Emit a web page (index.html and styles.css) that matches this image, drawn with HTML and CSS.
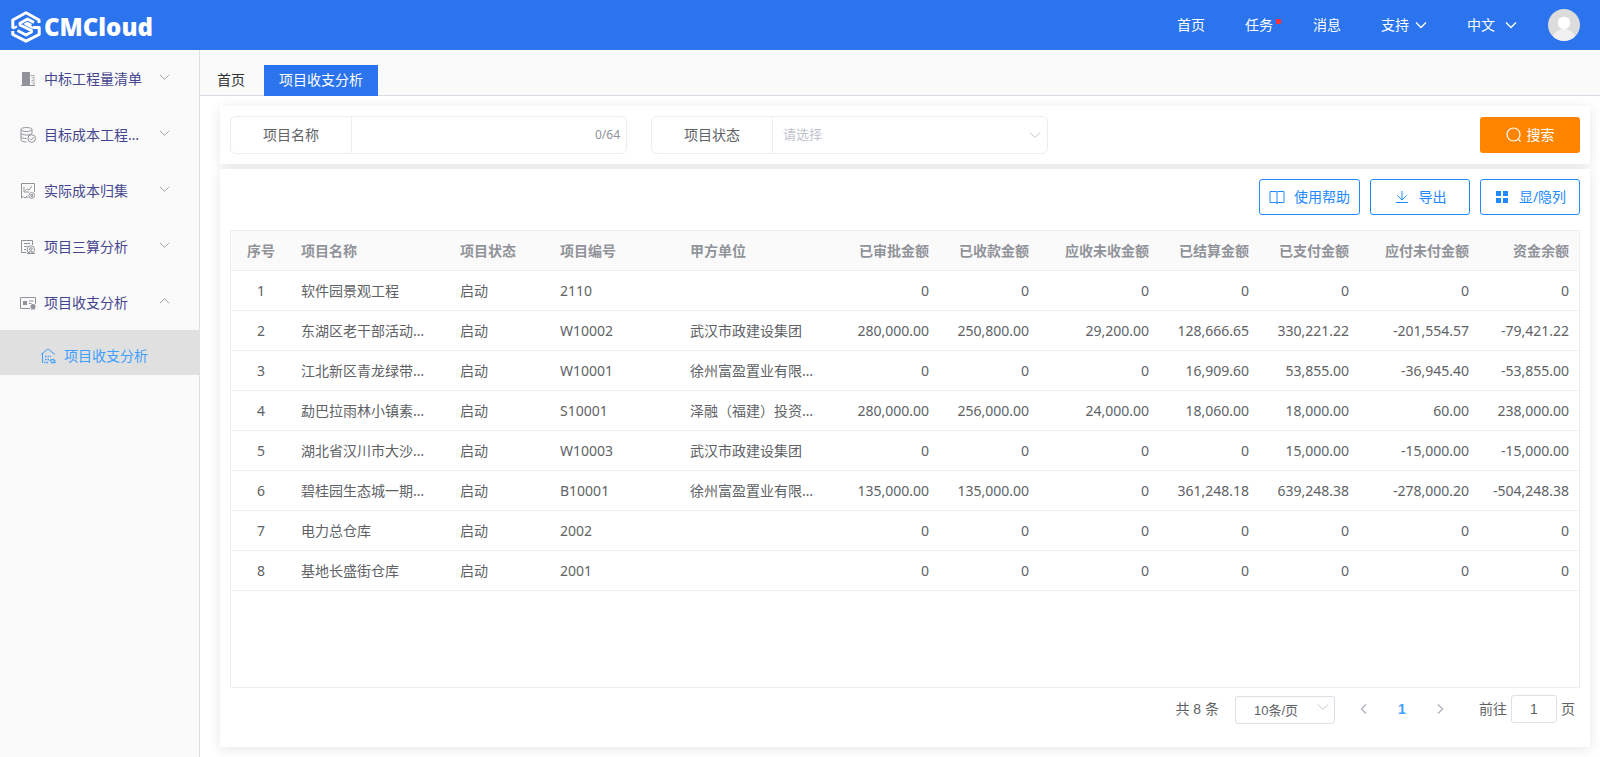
FILE: index.html
```html
<!DOCTYPE html>
<html lang="zh-CN">
<head>
<meta charset="utf-8">
<meta name="viewport" content="width=device-width, initial-scale=1">
<title>项目收支分析 - CMCloud</title>
<link rel="stylesheet" href="styles.css">
</head>
<body>
<svg class="defs" aria-hidden="true">
  <symbol id="down" viewBox="0 0 12 12"><path d="M1 3.5 6 8.5 11 3.5" fill="none" stroke="currentColor"/></symbol>
  <symbol id="up" viewBox="0 0 12 12"><path d="M1 8.500 6 3.500 11 8.500" fill="none" stroke="currentColor"/></symbol>
</svg>
<header class="topbar">
  <a class="logo" href="#" aria-label="CMCloud">
    <svg class="logo-mark" viewBox="0 0 30 32" fill="none" stroke="#fff" stroke-width="3" stroke-linejoin="round">
      <path d="M1.800 17.500V9L15 1.800 28 9V12"/>
      <path d="M1.800 20V23.500L15 30.200 28.200 23.500V16.500H22"/>
      <path d="M23 11.500 16.500 8 9 12.200V14L20.500 19.500V21L15 24 6.500 19.500" stroke-width="2.800"/>
      <path d="M20.500 13.800 16.500 11.800 14.200 13 22 17" stroke-width="2"/>
      <path d="M1.800 17.500 6 15.500" stroke-width="2"/>
    </svg>
    <span class="logo-text">CMCloud</span>
  </a>
  <nav class="topnav">
    <a href="#">首页</a>
    <a href="#" class="has-dot">任务</a>
    <a href="#">消息</a>
    <button type="button" class="nav-menu">支持<svg class="chev"><use href="#down"/></svg></button>
    <button type="button" class="nav-menu nav-lang">中文<svg class="chev"><use href="#down"/></svg></button>
    <button type="button" class="avatar" aria-label="用户">
      <svg viewBox="0 0 32 32"><circle cx="16" cy="16" r="16" fill="#dcdcdc"/><path d="M5 27.600C7 22.500 11 20 16 20s9 2.500 11 7.600A16 16 0 0 1 5 27.600Z" fill="#f0f0f0"/><circle cx="16" cy="14" r="6.200" fill="#fff"/></svg>
    </button>
  </nav>
</header>
<div class="shell">
  <aside class="sidebar">
    <button type="button" class="menu-item">
      <svg class="menu-icon" viewBox="0 0 16 16"><path d="M2 1h8v13H2zM1 14h14v1H1z" fill="#909399"/><path d="M10.500 4.500h3.500V14.500M11.500 7h1.500M11.500 9.500h1.500M11.500 12h1.500" fill="none" stroke="#a8abb2"/></svg>
      <span>中标工程量清单</span><svg class="chev"><use href="#down"/></svg>
    </button>
    <button type="button" class="menu-item">
      <svg class="menu-icon" viewBox="0 0 16 16" fill="none" stroke="#909399"><ellipse cx="6.500" cy="2.500" rx="5.500" ry="2"/><path d="M1 2.500v3.500c0 1.200 2.500 2 5.500 2s5.500-.8 5.500-2V2.500M1 6v3.500c0 1.200 2.500 2 5.500 2M1 9.500V13c0 1.200 2.500 2 5.500 2"/><circle cx="11.700" cy="11.500" r="3.800"/><path d="m9.800 11.500 1.500 1.500 2.500-2.700"/></svg>
      <span>目标成本工程量清单</span><svg class="chev"><use href="#down"/></svg>
    </button>
    <button type="button" class="menu-item">
      <svg class="menu-icon" viewBox="0 0 16 16" fill="none" stroke="#909399"><path d="M1.500 15V.5h13V9M1.500 15l2-1.500L5 15l2-1.500L8 15M4 4v5h5M5.500 7.500l2-1.500 1.500 1 3-4"/><circle cx="11.700" cy="12.500" r="2.900"/><path d="M11 11.500h1.500v2H11z"/></svg>
      <span>实际成本归集</span><svg class="chev"><use href="#down"/></svg>
    </button>
    <button type="button" class="menu-item">
      <svg class="menu-icon" viewBox="0 0 16 16" fill="none" stroke="#909399"><path d="M12.500 6V1.500h-11v12h5M4 4.500h6M4 7.500h3.500M4 10.500h2"/><circle cx="10.800" cy="10.500" r="3.700"/><circle cx="10.800" cy="10" r="1.300"/><path d="M7 14.500h8M9 13l1.800-1.200 1.800 1.200"/></svg>
      <span>项目三算分析</span><svg class="chev"><use href="#down"/></svg>
    </button>
    <button type="button" class="menu-item" aria-expanded="true">
      <svg class="menu-icon" viewBox="0 0 16 16" fill="none" stroke="#909399"><path d="M10 13.500H.5v-11h15V9M9 6h4.500M9 8.500h2.500"/><path d="M3 6h4v4H3z" fill="#909399" stroke="none"/><circle cx="13" cy="11.500" r="2.500" fill="#909399" stroke="none"/><path d="m12 13-.5 1.500 1.500-.7 1.500.7-.5-1.500" stroke-width=".8"/></svg>
      <span>项目收支分析</span><svg class="chev"><use href="#up"/></svg>
    </button>
    <a class="submenu-item" href="#" aria-current="page">
      <svg class="menu-icon" viewBox="0 0 16 16" fill="none" stroke="currentColor"><path d="M1 6.500 8 1l7 5.500M2.500 5.500V15"/><path d="M5 8.500h6M5 11.500h4M4 14.500h5" stroke-width="1.500" stroke-dasharray="1.500 1"/><path d="M10 13.500c0-2.500 5-2.500 5 0M11 14.500h4.500" stroke-width="1.300"/></svg>
      <span>项目收支分析</span>
    </a>
  </aside>
  <main class="main">
    <nav class="tabs">
      <a class="tab" href="#">首页</a>
      <a class="tab tab-active" href="#" aria-current="page">项目收支分析</a>
    </nav>
    <div class="content">
      <form class="card search">
        <div class="field">
          <label for="name">项目名称</label>
          <input id="name" type="text" maxlength="64">
          <span class="counter">0/64</span>
        </div>
        <div class="field">
          <label for="status">项目状态</label>
          <select id="status"><option>请选择</option><option>启动</option></select>
          <svg class="chev"><use href="#down"/></svg>
        </div>
        <button type="button" class="btn btn-search">
          <svg viewBox="0 0 16 16" fill="none" stroke="currentColor" stroke-width="1.200"><circle cx="7.500" cy="7.500" r="6.500"/><path d="m12.500 12.500 2 2"/></svg>搜索
        </button>
      </form>
      <section class="card report">
        <div class="toolbar">
          <button type="button" class="btn btn-line">
            <svg viewBox="0 0 16 16" fill="none" stroke="currentColor"><path d="M1 2.500h6q1 0 1 1 0-1 1-1h6v11H9q-1 0-1 1 0-1-1-1H1zM8 3.500v11"/></svg>使用帮助
          </button>
          <button type="button" class="btn btn-line">
            <svg viewBox="0 0 16 16" fill="none" stroke="currentColor"><path d="M8 2v9M3.500 6.500 8 11l4.500-4.500M2 13.500h12"/></svg>导出
          </button>
          <button type="button" class="btn btn-line">
            <svg viewBox="0 0 16 16" fill="currentColor"><path d="M2 2h5v5H2zM9 2h5v5H9zM2 9h5v5H2zM9 9h5v5H9z"/></svg>显/隐列
          </button>
        </div>
        <div class="table-box">
          <table class="grid">
            <colgroup><col class="c60"><col><col class="c100"><col class="c130"><col><col class="c100"><col class="c100"><col class="c120"><col class="c100"><col class="c100"><col class="c120"><col class="c100"></colgroup>
            <thead><tr><th>序号</th><th>项目名称</th><th>项目状态</th><th>项目编号</th><th>甲方单位</th><th>已审批金额</th><th>已收款金额</th><th>应收未收金额</th><th>已结算金额</th><th>已支付金额</th><th>应付未付金额</th><th>资金余额</th></tr></thead>
            <tbody>
              <tr><td>1</td><td>软件园景观工程</td><td>启动</td><td>2110</td><td></td><td>0</td><td>0</td><td>0</td><td>0</td><td>0</td><td>0</td><td>0</td></tr>
              <tr><td>2</td><td>东湖区老干部活动中心</td><td>启动</td><td>W10002</td><td>武汉市政建设集团</td><td>280,000.00</td><td>250,800.00</td><td>29,200.00</td><td>128,666.65</td><td>330,221.22</td><td>-201,554.57</td><td>-79,421.22</td></tr>
              <tr><td>3</td><td>江北新区青龙绿带工程</td><td>启动</td><td>W10001</td><td>徐州富盈置业有限公司</td><td>0</td><td>0</td><td>0</td><td>16,909.60</td><td>53,855.00</td><td>-36,945.40</td><td>-53,855.00</td></tr>
              <tr><td>4</td><td>勐巴拉雨林小镇素材项目</td><td>启动</td><td>S10001</td><td>泽融（福建）投资有限公司</td><td>280,000.00</td><td>256,000.00</td><td>24,000.00</td><td>18,060.00</td><td>18,000.00</td><td>60.00</td><td>238,000.00</td></tr>
              <tr><td>5</td><td>湖北省汉川市大沙项目</td><td>启动</td><td>W10003</td><td>武汉市政建设集团</td><td>0</td><td>0</td><td>0</td><td>0</td><td>15,000.00</td><td>-15,000.00</td><td>-15,000.00</td></tr>
              <tr><td>6</td><td>碧桂园生态城一期工程</td><td>启动</td><td>B10001</td><td>徐州富盈置业有限公司</td><td>135,000.00</td><td>135,000.00</td><td>0</td><td>361,248.18</td><td>639,248.38</td><td>-278,000.20</td><td>-504,248.38</td></tr>
              <tr><td>7</td><td>电力总仓库</td><td>启动</td><td>2002</td><td></td><td>0</td><td>0</td><td>0</td><td>0</td><td>0</td><td>0</td><td>0</td></tr>
              <tr><td>8</td><td>基地长盛街仓库</td><td>启动</td><td>2001</td><td></td><td>0</td><td>0</td><td>0</td><td>0</td><td>0</td><td>0</td><td>0</td></tr>
            </tbody>
          </table>
        </div>
        <div class="pager">
          <span>共 8 条</span>
          <div class="page-size">
            <select aria-label="每页条数"><option>10条/页</option><option>20条/页</option></select>
            <svg class="chev"><use href="#down"/></svg>
          </div>
          <div class="page-nav">
            <button type="button" disabled aria-label="上一页"><svg viewBox="0 0 12 12"><path d="M8 1.500 3.500 6 8 10.500" fill="none" stroke="currentColor" stroke-width="1.500"/></svg></button>
            <button type="button" class="current">1</button>
            <button type="button" disabled aria-label="下一页"><svg viewBox="0 0 12 12"><path d="M4 1.500 8.500 6 4 10.500" fill="none" stroke="currentColor" stroke-width="1.500"/></svg></button>
          </div>
          <div class="jump"><label for="page">前往</label><input id="page" type="text" value="1"><span>页</span></div>
        </div>
      </section>
    </div>
  </main>
</div>
</body>
</html>
```
FILE: styles.css
```css
* { box-sizing: border-box; }
body {
  margin: 0;
  min-height: 100vh;
  display: flex;
  flex-direction: column;
  background: #fff;
  color: #606266;
  font: 14px/20px "Noto Sans", "Noto Sans CJK SC", sans-serif;
}
button, input, select { font: inherit; color: inherit; margin: 0; padding: 0; border: 0; background: none; outline: 0; }
button { cursor: pointer; }
a { color: inherit; text-decoration: none; }
select { appearance: none; }
.defs { display: none; }
.chev { width: 12px; height: 12px; flex: none; }

.topbar {
  height: 50px;
  flex: none;
  display: flex;
  align-items: center;
  justify-content: space-between;
  padding: 0 20px 0 11px;
  background: #2b74ed;
  color: #fff;
}
.logo { display: flex; align-items: center; gap: 3px; padding-top: 3px; }
.logo-mark { width: 30px; height: 32px; }
.logo-text { font: 800 24px/32px "Open Sans", sans-serif; }
.topnav { display: flex; align-items: center; gap: 40px; }
.has-dot { position: relative; }
.has-dot::after { content: ""; position: absolute; left: 31px; top: 4px; width: 5px; height: 5px; background: #fb3434; border-radius: 1px; }
.nav-menu { display: flex; align-items: center; gap: 6px; }
.nav-menu .chev { stroke-width: 1.300; }
.nav-lang { gap: 10px; }
.avatar { width: 32px; height: 32px; margin-left: -9px; }
.avatar svg { display: block; }

.shell { flex: 1; display: flex; }
.sidebar { width: 200px; flex: none; background: #fafafa; border-right: 1px solid #e0e0e0; }
.menu-item { width: 100%; height: 56px; display: flex; align-items: center; gap: 8px; padding: 2px 29px 0 20px; color: #45458f; text-align: left; }
.menu-icon { width: 16px; height: 16px; flex: none; }
.menu-item span { width: 101px; overflow: hidden; text-overflow: ellipsis; white-space: nowrap; }
.menu-item .chev { width: 11px; margin: 0 0 4px auto; color: #909399; }
.submenu-item { height: 45px; display: flex; align-items: center; gap: 8px; padding: 6px 0 0 40px; background: #e0e0e0; color: #409eff; }

.main { flex: 1; min-width: 0; display: flex; flex-direction: column; }
.tabs { height: 46px; display: flex; align-items: flex-end; gap: 4px; padding-left: 2px; background: #fafafa; border-bottom: 1px solid #d8dce5; }
.tab { height: 31px; padding: 0 15px; margin-bottom: -1px; line-height: 30px; color: #303133; }
.tab-active { background: #2b74ed; color: #fff; }
.content { flex: 1; display: flex; flex-direction: column; gap: 5px; padding: 10px 10px 10px 20px; }
.card { background: #fff; box-shadow: 0 2px 12px rgba(0, 0, 0, .1); }

.search { display: flex; align-items: center; gap: 24px; height: 58px; padding: 0 10px; }
.field { position: relative; flex: 0 1 397px; height: 38px; display: flex; align-items: center; border: 1px solid #ebeef0; border-radius: 6px; }
.field label { width: 121px; flex: none; line-height: 36px; text-align: center; border-right: 1px solid #ebeef0; }
.field input { flex: 1; min-width: 0; height: 36px; padding: 0 10px; }
.field select { flex: 1; height: 36px; padding: 0 10px 2px; font-size: 13px; color: #c0c4cc; }
.field .chev { position: absolute; right: 6px; color: #c0c4cc; pointer-events: none; }
.counter { padding-right: 6px; font-size: 12px; color: #909399; }
.btn { display: flex; align-items: center; justify-content: center; height: 36px; min-width: 100px; border-radius: 3px; }
.btn svg { width: 16px; height: 16px; }
.btn-search { margin-left: auto; gap: 5px; background: #ff8400; color: #fff; }
.btn-line { gap: 9px; padding: 0 9px; border: 1px solid #218aff; color: #218aff; }

.report { flex: 1; display: flex; flex-direction: column; padding: 10px 10px 0; }
.toolbar { display: flex; justify-content: flex-end; gap: 10px; padding-bottom: 15px; }
.table-box { flex: 1; border: 1px solid #ebeef5; }
.grid { width: 100%; table-layout: fixed; border-spacing: 0; }
.c60 { width: 60px; }
.c100 { width: 100px; }
.c120 { width: 120px; }
.c130 { width: 130px; }
.grid th, .grid td { height: 40px; padding: 0 10px; border-bottom: 1px solid #ebeef5; text-align: right; overflow: hidden; text-overflow: ellipsis; white-space: nowrap; }
.grid th { background: #fafafa; color: #909399; font-weight: 700; }
.grid td:nth-child(2), .grid td:nth-child(5) { padding-right: 20px; }
.grid th:nth-child(-n+5), .grid td:nth-child(-n+5) { text-align: left; }
.grid th:first-child, .grid td:first-child { text-align: center; }

.pager { height: 59px; display: flex; align-items: flex-start; justify-content: flex-end; padding: 7px 5px 0 0; font-family: "Liberation Sans", "Noto Sans CJK SC", sans-serif; line-height: 28px; }
.page-size { position: relative; width: 100px; margin: 1px 13px 0 16px; }
.page-size select { display: block; width: 100%; height: 28px; padding: 0 18px 2px 0; border: 1px solid #dcdfe6; border-radius: 3px; font-size: 13px; text-align: center; text-align-last: center; }
.page-size .chev { position: absolute; right: 6px; top: 5px; color: #c0c4cc; pointer-events: none; }
.page-nav { display: flex; gap: 6px; }
.page-nav button { width: 32px; height: 28px; }
.page-nav button svg { width: 12px; height: 12px; vertical-align: -1px; color: #b4b8bf; }
.page-nav .current { color: #409eff; font-weight: 700; }
.jump { display: flex; gap: 4px; margin-left: 23px; }
.jump input { width: 46px; height: 28px; border: 1px solid #dcdfe6; border-radius: 3px; text-align: center; }
```
